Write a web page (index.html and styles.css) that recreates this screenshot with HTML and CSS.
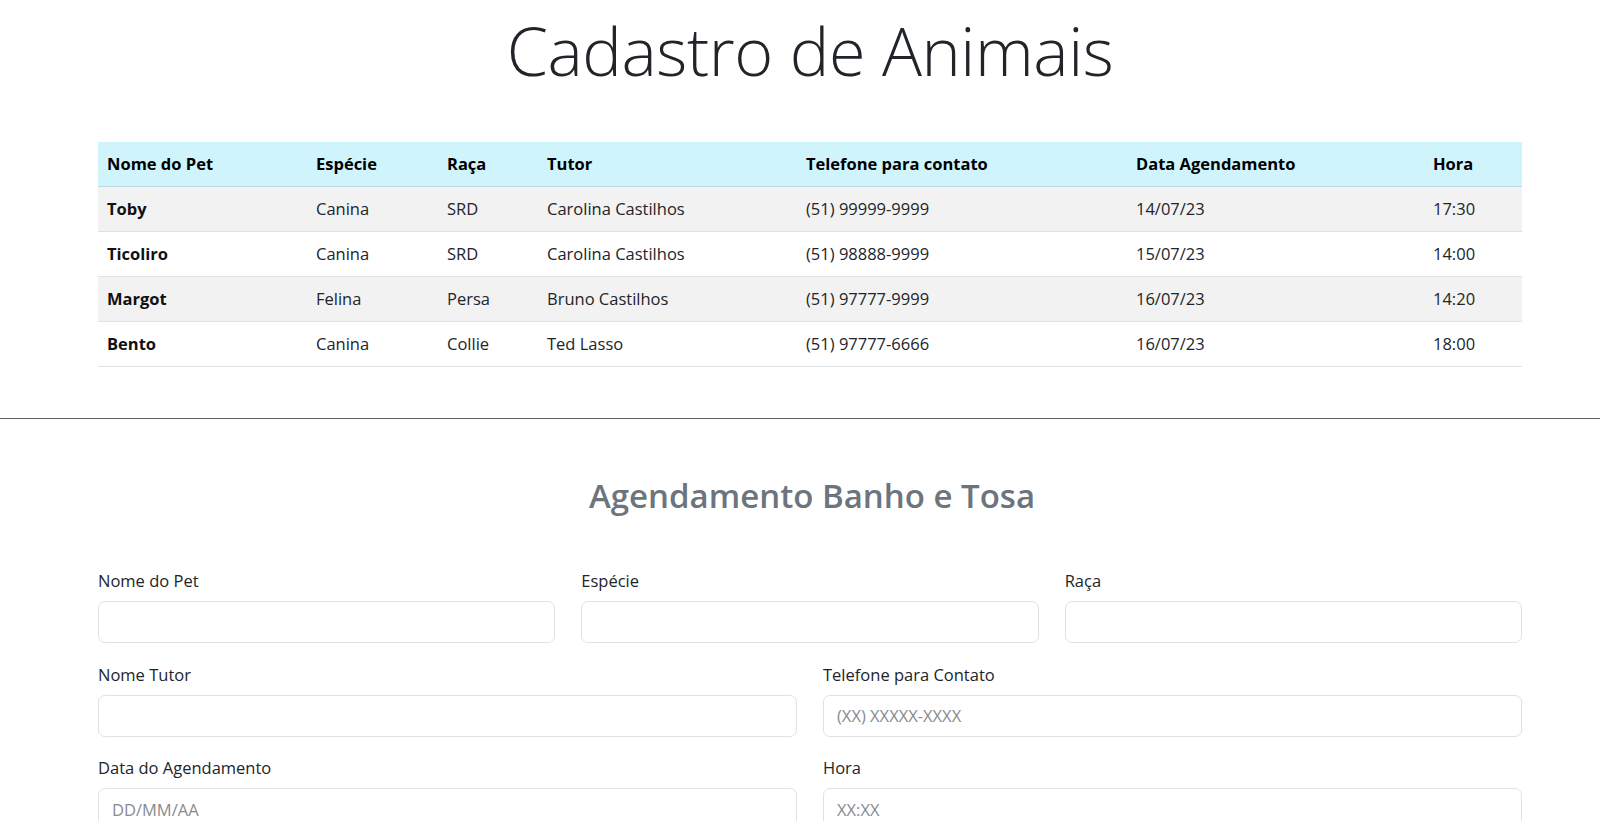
FILE: index.html
```html
<!DOCTYPE html>
<html lang="pt-BR">
<head>
<meta charset="utf-8">
<title>Cadastro de Animais</title>
<link rel="stylesheet" href="styles.css">
</head>
<body>
<header class="page-head">
  <h1 class="title">Cadastro de Animais</h1>
</header>
<section class="wrap">
  <table class="pets">
    <colgroup>
      <col class="c-nome"><col class="c-esp"><col class="c-raca"><col class="c-tutor"><col class="c-tel"><col class="c-data"><col class="c-hora">
    </colgroup>
    <thead>
      <tr><th>Nome do Pet</th><th>Espécie</th><th>Raça</th><th>Tutor</th><th>Telefone para contato</th><th>Data Agendamento</th><th>Hora</th></tr>
    </thead>
    <tbody>
      <tr><th>Toby</th><td>Canina</td><td>SRD</td><td>Carolina Castilhos</td><td>(51) 99999-9999</td><td>14/07/23</td><td>17:30</td></tr>
      <tr><th>Ticoliro</th><td>Canina</td><td>SRD</td><td>Carolina Castilhos</td><td>(51) 98888-9999</td><td>15/07/23</td><td>14:00</td></tr>
      <tr><th>Margot</th><td>Felina</td><td>Persa</td><td>Bruno Castilhos</td><td>(51) 97777-9999</td><td>16/07/23</td><td>14:20</td></tr>
      <tr><th>Bento</th><td>Canina</td><td>Collie</td><td>Ted Lasso</td><td>(51) 97777-6666</td><td>16/07/23</td><td>18:00</td></tr>
    </tbody>
  </table>
</section>
<hr class="divider">
<section class="wrap form-wrap">
  <h2 class="subtitle">Agendamento Banho e Tosa</h2>
  <form class="form">
    <div class="row row-3">
      <div class="field"><label class="label" for="pet">Nome do Pet</label><input class="control" id="pet" type="text"></div>
      <div class="field"><label class="label" for="esp">Espécie</label><input class="control" id="esp" type="text"></div>
      <div class="field"><label class="label" for="raca">Raça</label><input class="control" id="raca" type="text"></div>
    </div>
    <div class="row row-2">
      <div class="field"><label class="label" for="tutor">Nome Tutor</label><input class="control" id="tutor" type="text"></div>
      <div class="field"><label class="label" for="tel">Telefone para Contato</label><input class="control" id="tel" type="text" placeholder="(XX) XXXXX-XXXX"></div>
    </div>
    <div class="row row-2">
      <div class="field"><label class="label" for="data">Data do Agendamento</label><input class="control" id="data" type="text" placeholder="DD/MM/AA"></div>
      <div class="field"><label class="label" for="hora">Hora</label><input class="control" id="hora" type="text" placeholder="XX:XX"></div>
    </div>
  </form>
</section>
</body>
</html>
```

FILE: styles.css
```css
* { box-sizing: border-box; }

body {
  margin: 0;
  font-family: "Open Sans", "Noto Sans", sans-serif;
  font-size: 16.5px;
  color: #212529;
  background: #fff;
}

.page-head {
  width: 1424px;
  margin-left: 98px;
  padding-top: 5px;
  text-align: center;
}

.title {
  margin: 0;
  font-size: 66.5px;
  font-weight: 300;
  letter-spacing: -0.4px;
  line-height: 90px;
}

.wrap {
  width: 1424px;
  margin-left: 98px;
}

.pets {
  margin-top: 47px;
  width: 100%;
  border-collapse: collapse;
  table-layout: fixed;
}

.c-nome { width: 209px; }
.c-esp { width: 131px; }
.c-raca { width: 100px; }
.c-tutor { width: 259px; }
.c-tel { width: 330px; }
.c-data { width: 297px; }
.c-hora { width: 98px; }

.pets th,
.pets td {
  text-align: left;
  padding: 9px 9px;
  line-height: 26px;
  border-bottom: 1px solid #dee2e6;
  white-space: nowrap;
}

.pets th { font-weight: 700; color: #111; }
.pets td { font-weight: 400; }

.pets thead th {
  background: #cff4fc;
  border-bottom-color: #badce3;
  color: #000;
}

.pets tbody tr:nth-child(odd) { background: #f2f2f2; }

.divider {
  margin: 51px 0 0;
  border: 0;
  border-top: 1px solid #5f5f5f;
  height: 0;
}

.form-wrap { padding-top: 56px; }

.subtitle {
  margin: 0 0 51px;
  padding-left: 4px;
  text-align: center;
  font-size: 33px;
  font-weight: 600;
  line-height: 42px;
  color: #6c757d;
}

.row {
  display: grid;
  gap: 26px;
  margin-bottom: 18.5px;
}

.row-3 { grid-template-columns: repeat(3, 1fr); }
.row-2 { grid-template-columns: repeat(2, 1fr); }

.field { display: flex; flex-direction: column; }

.label {
  display: block;
  line-height: 26px;
  margin-bottom: 7px;
  color: #212529;
}

.control {
  display: block;
  width: 100%;
  height: 42px;
  padding: 0 13px;
  font: inherit;
  color: #212529;
  background: #fff;
  border: 1px solid #dee2e6;
  border-radius: 7px;
}

.control::placeholder { color: #868b90; }
```
